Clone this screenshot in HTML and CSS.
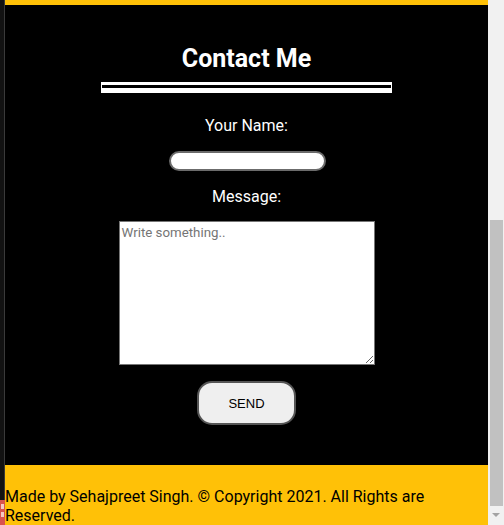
FILE: index.html
```html
<!DOCTYPE html>
<html lang="en">
<head>
<meta charset="utf-8">
<title>Contact Me</title>
<link rel="stylesheet" href="styles.css">
</head>
<body>
<div class="frame">
  <div class="edge">
    <span class="badge"><i class="mark"></i><i class="mark"></i></span>
  </div>
  <div class="page">
    <div class="topbar"></div>
    <section class="contact">
      <h2 class="title">Contact Me</h2>
      <div class="rule"></div>
      <label class="label label-name" for="name">Your Name:</label>
      <input class="name-input" id="name" type="text">
      <label class="label label-msg" for="msg">Message:</label>
      <textarea class="msg" id="msg" placeholder="Write something.."></textarea>
      <button class="send" type="button">SEND</button>
    </section>
    <footer class="footer">
      <p class="footer-text">Made by Sehajpreet Singh. © Copyright 2021. All Rights are Reserved.</p>
    </footer>
  </div>
  <div class="scrollbar">
    <div class="thumb"></div>
    <div class="arrow"></div>
  </div>
</div>
</body>
</html>
```
FILE: styles.css
```css
html, body {
  margin: 0;
  padding: 0;
  height: 525px;
  overflow: hidden;
  background: #f1f1f1;
}
.frame {
  display: flex;
  height: 525px;
  font-family: Roboto, "Liberation Sans", sans-serif;
}
.edge {
  width: 4px;
  border-right: 1px solid #3a3a3a;
  background: #121212;
  position: relative;
  flex: none;
}
.badge {
  position: absolute;
  left: 0;
  top: 500px;
  width: 5px;
  height: 25px;
  background: #d9534f;
  display: flex;
  flex-direction: column;
  align-items: center;
  gap: 3px;
  padding-top: 4px;
  box-sizing: border-box;
}
.mark {
  display: block;
  width: 3px;
  height: 5px;
  background: #f3c8c6;
}
.page {
  width: 483px;
  flex: none;
  display: flex;
  flex-direction: column;
  overflow: hidden;
}
.topbar {
  height: 5px;
  background: #ffc107;
  flex: none;
}
.contact {
  background: #000;
  height: 460px;
  box-sizing: border-box;
  padding-top: 40px;
  display: flex;
  flex-direction: column;
  align-items: center;
  flex: none;
}
.title {
  margin: 0;
  color: #fff;
  font-size: 25px;
  font-weight: 700;
  line-height: 28px;
  height: 28px;
}
.rule {
  margin-top: 9px;
  width: 289px;
  height: 3px;
  border: 1px solid #fff;
  border-top-width: 3px;
  border-bottom-width: 5px;
}
.label {
  color: #fff;
  font-size: 16px;
  line-height: 19px;
}
.label-name { margin-top: 23px; }
.label-msg { margin-top: 16px; }
.name-input {
  margin-top: 16px;
  margin-left: 2px;
  width: 157px;
  height: 20px;
  box-sizing: border-box;
  border: 2px solid #6b6b6b;
  border-radius: 10px;
  background: #fff;
  padding: 0 8px;
}
.msg {
  margin-top: 15px;
  width: 256px;
  height: 144px;
  box-sizing: border-box;
  border: 1px solid #767676;
  background: #fff;
  font-family: Roboto, "Liberation Sans", sans-serif;
  font-size: 13.3px;
  padding: 3px 2px;
}
.msg::placeholder {
  color: #757575;
}
.send {
  margin-top: 16px;
  width: 99px;
  height: 44px;
  box-sizing: border-box;
  border: 2px solid #555;
  border-radius: 15px;
  background: #efefef;
  font-family: "Liberation Sans", Arial, sans-serif;
  font-size: 13px;
  color: #000;
  padding: 0;
}
.footer {
  background: #ffc107;
  flex: 1;
  padding-top: 22px;
}
.footer-text {
  margin: 0;
  color: #000;
  font-size: 16px;
  line-height: 19px;
}
.scrollbar {
  width: 16px;
  flex: none;
  background: #f1f1f1;
  position: relative;
}
.thumb {
  position: absolute;
  left: 2px;
  top: 220px;
  width: 13px;
  height: 286px;
  background: #c1c1c1;
}
.arrow {
  position: absolute;
  left: 4px;
  top: 513px;
  width: 0;
  height: 0;
  border-left: 4px solid transparent;
  border-right: 4px solid transparent;
  border-top: 4px solid #a3a3a3;
}
```
